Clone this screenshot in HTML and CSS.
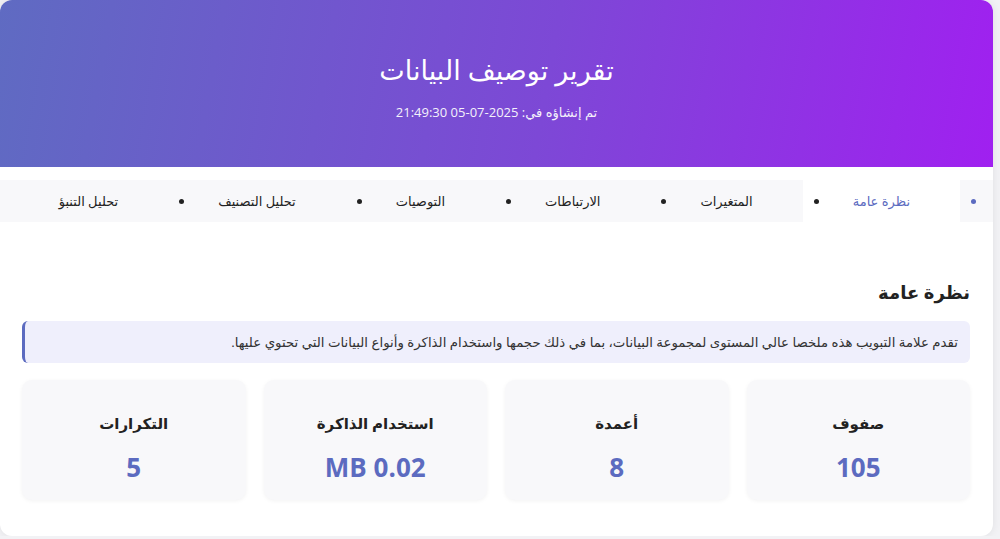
FILE: index.html
```html
<!DOCTYPE html>
<html lang="ar" dir="rtl">
<head>
  <meta charset="utf-8">
  <title>تقرير توصيف البيانات</title>
  <link rel="stylesheet" href="styles.css">
</head>
<body>
  <div class="report">
    <!-- رأس التقرير -->
    <div class="header">
      <h1>تقرير توصيف البيانات</h1>
      <p class="generated">تم إنشاؤه في: 2025-07-05 21:49:30</p>
    </div>

    <!-- شريط التبويب -->
    <ul class="tabs">
      <li class="tab active">نظرة عامة</li>
      <li class="tab">المتغيرات</li>
      <li class="tab">الارتباطات</li>
      <li class="tab">التوصيات</li>
      <li class="tab">تحليل التصنيف</li>
      <li class="tab">تحليل التنبؤ</li>
    </ul>

    <!-- نظرة عامة -->
    <div class="tab-content">
      <h2>نظرة عامة</h2>
      <div class="info">تقدم علامة التبويب هذه ملخصا عالي المستوى لمجموعة البيانات، بما في ذلك حجمها واستخدام الذاكرة وأنواع البيانات التي تحتوي عليها.</div>

      <div class="stats">
        <div class="stat-card">
          <div class="stat-label">صفوف</div>
          <div class="stat-value">105</div>
        </div>
        <div class="stat-card">
          <div class="stat-label">أعمدة</div>
          <div class="stat-value">8</div>
        </div>
        <div class="stat-card">
          <div class="stat-label">استخدام الذاكرة</div>
          <div class="stat-value">0.02 MB</div>
        </div>
        <div class="stat-card">
          <div class="stat-label">التكرارات</div>
          <div class="stat-value">5</div>
        </div>
      </div>
    </div>
  </div>
</body>
</html>
```

FILE: styles.css
```css
body {
  margin: 0;
  background: #f2f2f5;
  font-family: "Segoe UI", "Open Sans", "DejaVu Sans", sans-serif;
  color: #222;
}

.report {
  width: 993px;
  min-height: 536px;
  margin-left: 0;
  margin-right: auto;
  background: white;
  border-radius: 12px;
  box-shadow: 0 0 8px rgba(0, 0, 0, 0.08);
  overflow: hidden;
}

.header {
  height: 167px;
  box-sizing: border-box;
  padding-top: 50px;
  text-align: center;
  color: white;
  background: linear-gradient(100deg, #5f6bc2 0%, #7d48d6 55%, #a020f0 100%);
}

.header h1 {
  margin: 0;
  font-size: 27px;
  font-weight: normal;
  line-height: 40px;
}

.generated {
  margin: 12px 0 0;
  font-size: 13px;
  line-height: 20px;
  opacity: 0.92;
}

.tabs {
  display: flex;
  list-style: disc;
  margin: 13px 0 0;
  padding: 0 33px 0 0;
  background: #f8f8fa;
  white-space: nowrap;
}

.tab {
  flex-shrink: 0;
  padding: 11px 50px;
  font-size: 13px;
  line-height: 20px;
  cursor: pointer;
}

.tab.active {
  background: white;
  color: #5c6bc0;
}

.tab-content {
  padding: 56px 23px 30px 22px;
}

.tab-content h2 {
  margin: 0 0 15px;
  font-size: 18px;
  font-weight: 700;
  line-height: 28px;
}

.info {
  padding: 11px 12px;
  font-size: 13.3px;
  line-height: 20px;
  color: #333;
  background: #efeffc;
  border-left: 3px solid #5c6bc0;
  border-radius: 6px;
}

.stats {
  display: grid;
  grid-template-columns: repeat(4, 1fr);
  gap: 18px;
  margin-top: 17px;
}

.stat-card {
  height: 120px;
  box-sizing: border-box;
  padding-top: 31px;
  text-align: center;
  background: #f8f8fa;
  border-radius: 10px;
  box-shadow: 0 1px 4px rgba(0, 0, 0, 0.05);
}

.stat-label {
  font-size: 15px;
  font-weight: 700;
  line-height: 24px;
}

.stat-value {
  margin-top: 15px;
  font-size: 26px;
  font-weight: 700;
  line-height: 34px;
  color: #5c6bc0;
}
```
